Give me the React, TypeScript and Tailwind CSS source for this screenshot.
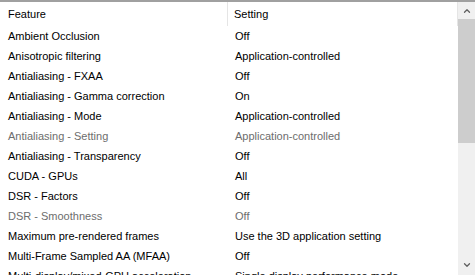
import { ChevronUp, ChevronDown } from 'lucide-react';

const rows = [
  { feature: 'Ambient Occlusion', setting: 'Off' },
  { feature: 'Anisotropic filtering', setting: 'Application-controlled' },
  { feature: 'Antialiasing - FXAA', setting: 'Off' },
  { feature: 'Antialiasing - Gamma correction', setting: 'On' },
  { feature: 'Antialiasing - Mode', setting: 'Application-controlled' },
  { feature: 'Antialiasing - Setting', setting: 'Application-controlled', disabled: true },
  { feature: 'Antialiasing - Transparency', setting: 'Off' },
  { feature: 'CUDA - GPUs', setting: 'All' },
  { feature: 'DSR - Factors', setting: 'Off' },
  { feature: 'DSR - Smoothness', setting: 'Off', disabled: true },
  { feature: 'Maximum pre-rendered frames', setting: 'Use the 3D application setting' },
  { feature: 'Multi-Frame Sampled AA (MFAA)', setting: 'Off' },
  { feature: 'Multi-display/mixed-GPU acceleration', setting: 'Single display performance mode' },
];

export default function App() {
  return (
    <div
      className="w-[475px] h-[275px] overflow-hidden bg-white border-t-2 border-[#a0a0a0] flex text-[11px] text-black"
      style={{ fontFamily: '"Liberation Sans", Arial, sans-serif' }}
    >
      {/* List */}
      <div className="flex-1 flex flex-col min-w-0">
        {/* Header */}
        <div className="h-[24px] flex items-center shrink-0">
          <div className="w-[228px] h-full flex items-center pl-[8px] border-r border-[#e5e5e5]">Feature</div>
          <div className="flex-1 h-full flex items-center pl-[6px] border-r border-[#e5e5e5]">Setting</div>
        </div>
        {rows.map((row) => (
          <div
            key={row.feature}
            className={`h-[20px] shrink-0 flex items-center whitespace-nowrap ${row.disabled ? 'text-[#6d6d6d]' : ''}`}
          >
            <div className="w-[228px] pl-[8px]">{row.feature}</div>
            <div className="flex-1 pl-[7px]">{row.setting}</div>
          </div>
        ))}
      </div>

      {/* Scrollbar */}
      <div className="w-[17px] shrink-0 bg-[#f0f0f0] flex flex-col">
        <div className="h-[17px] flex items-center justify-center text-[#606060]">
          <ChevronUp className="w-[10px] h-[10px]" strokeWidth={3} />
        </div>
        <div className="h-[124px] bg-[#cdcdcd]" />
        <div className="flex-1" />
        <div className="h-[17px] flex items-center justify-center text-[#606060] mb-[2px]">
          <ChevronDown className="w-[10px] h-[10px]" strokeWidth={3} />
        </div>
      </div>
    </div>
  );
}
